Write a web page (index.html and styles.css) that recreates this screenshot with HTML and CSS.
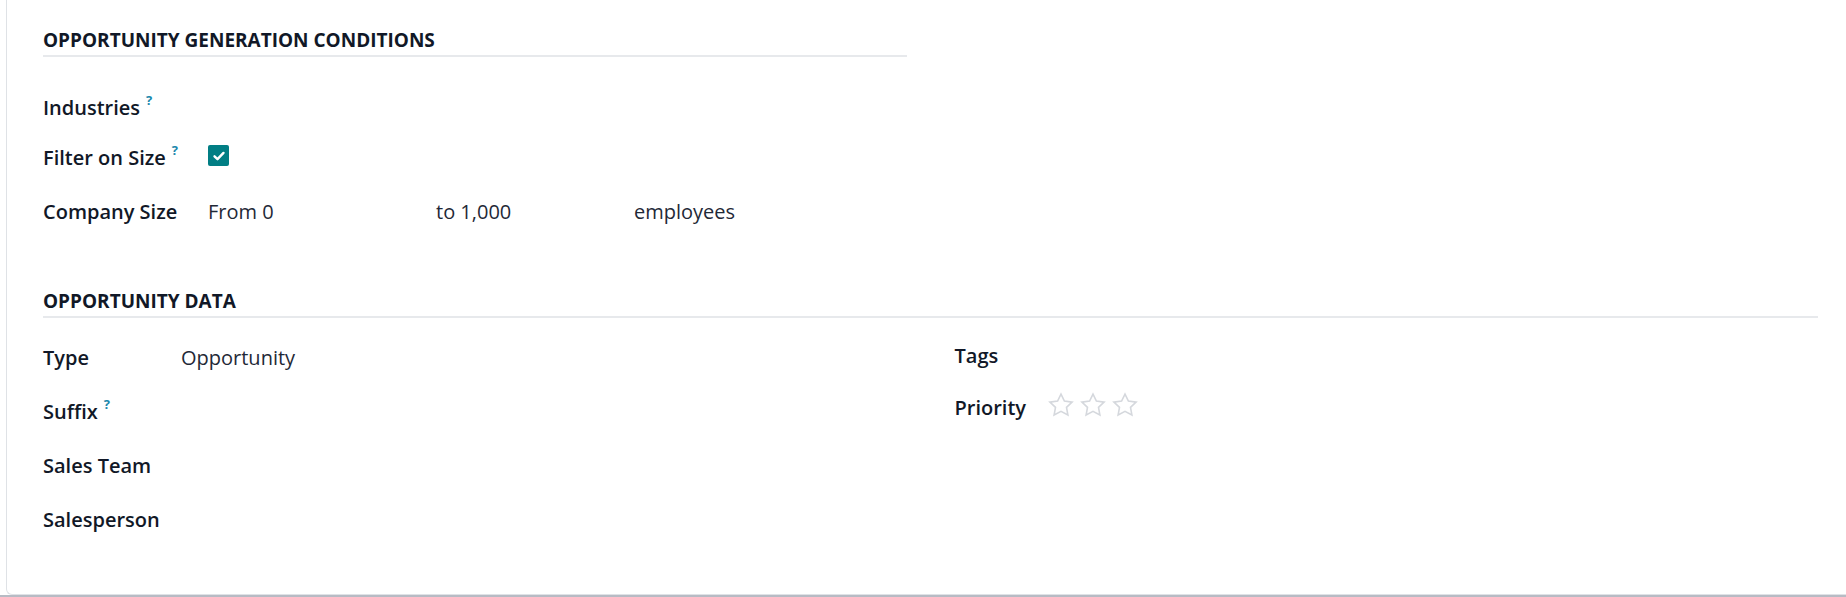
FILE: index.html
```html
<!DOCTYPE html>
<html lang="en">
<head>
<meta charset="utf-8">
<title>Opportunity generation</title>
<link rel="stylesheet" href="styles.css">
</head>
<body>
<div class="page">
  <div class="sheet">
    <section class="section section--half">
      <h2 class="separator">OPPORTUNITY GENERATION CONDITIONS</h2>
      <div class="group group--conditions">
        <div class="row row--industries">
          <div class="label">Industries<sup class="help">?</sup></div>
          <div class="value"></div>
        </div>
        <div class="row row--filter">
          <div class="label">Filter on Size<sup class="help">?</sup></div>
          <div class="value">
            <span class="checkbox">
              <svg viewBox="0 0 20 20" width="20" height="20" aria-hidden="true"><path d="M5.5 10.3l3 2.9 6-6.3" fill="none" stroke="#fff" stroke-width="2.4" stroke-linecap="round" stroke-linejoin="round"/></svg>
            </span>
          </div>
        </div>
        <div class="row">
          <div class="label">Company Size</div>
          <div class="value range">
            <span class="range-part range-part--from">From 0</span>
            <span class="range-part range-part--to">to 1,000</span>
            <span class="range-part">employees</span>
          </div>
        </div>
      </div>
    </section>

    <section class="section section--data">
      <h2 class="separator">OPPORTUNITY DATA</h2>
      <div class="columns">
        <div class="group group--left">
          <div class="row">
            <div class="label">Type</div>
            <div class="value">Opportunity</div>
          </div>
          <div class="row">
            <div class="label">Suffix<sup class="help">?</sup></div>
            <div class="value"></div>
          </div>
          <div class="row">
            <div class="label">Sales Team</div>
            <div class="value"></div>
          </div>
          <div class="row">
            <div class="label">Salesperson</div>
            <div class="value"></div>
          </div>
        </div>
        <div class="group group--right">
          <div class="row">
            <div class="label">Tags</div>
            <div class="value"></div>
          </div>
          <div class="row">
            <div class="label">Priority</div>
            <div class="value stars">
              <svg class="star" viewBox="0 0 26 24" width="26" height="25" aria-hidden="true"><path d="M13 1.6l3.4 7 7.7 1-5.6 5.3 1.4 7.6L13 18.8l-6.9 3.7 1.4-7.6-5.6-5.3 7.7-1z" fill="none" stroke="#d5d8dd" stroke-width="1.6" stroke-linejoin="miter"/></svg>
              <svg class="star" viewBox="0 0 26 24" width="26" height="25" aria-hidden="true"><path d="M13 1.6l3.4 7 7.7 1-5.6 5.3 1.4 7.6L13 18.8l-6.9 3.7 1.4-7.6-5.6-5.3 7.7-1z" fill="none" stroke="#d5d8dd" stroke-width="1.6" stroke-linejoin="miter"/></svg>
              <svg class="star" viewBox="0 0 26 24" width="26" height="25" aria-hidden="true"><path d="M13 1.6l3.4 7 7.7 1-5.6 5.3 1.4 7.6L13 18.8l-6.9 3.7 1.4-7.6-5.6-5.3 7.7-1z" fill="none" stroke="#d5d8dd" stroke-width="1.6" stroke-linejoin="miter"/></svg>
            </div>
          </div>
        </div>
      </div>
    </section>
  </div>
</div>
</body>
</html>
```

FILE: styles.css
```css
html, body {
  margin: 0;
  padding: 0;
  height: 597px;
  overflow: hidden;
  background: #ffffff;
}

body {
  font-family: "Open Sans", "Noto Sans", "DejaVu Sans", sans-serif;
  font-size: 20px;
  line-height: 28px;
  color: #111827;
}

.page {
  height: 597px;
  box-sizing: border-box;
  border-bottom: 2px solid #b7bbc4;
}

.sheet {
  height: 100%;
  margin-left: 6px;
  box-sizing: border-box;
  border-left: 1px solid #dfe2e6;
  border-bottom: 1px solid #dfe2e6;
  border-bottom-left-radius: 6px;
  padding: 26px 28px 0 36px;
}

.section--half {
  width: 864px;
}

.section--data {
  margin-top: 61px;
}

.separator {
  margin: 0;
  padding-bottom: 1px;
  font-size: 19px;
  line-height: 28px;
  font-weight: 700;
  color: #111827;
  border-bottom: 2px solid #e7e9ec;
}

.group--conditions {
  margin-top: 37px;
}

.columns {
  display: grid;
  grid-template-columns: 1fr 1fr;
  column-gap: 48px;
  margin-top: 26px;
}

.row {
  display: grid;
  min-height: 28px;
  margin-bottom: 24px;
}

.row:last-child {
  margin-bottom: 0;
}

.group--conditions .row {
  grid-template-columns: 165px 1fr;
}

.group--conditions .row--industries {
  margin-bottom: 22px;
}

.group--conditions .row--filter {
  margin-bottom: 25px;
}

.group--left .row {
  grid-template-columns: 138px 1fr;
  margin-bottom: 26px;
}

.group--left .row:last-child {
  margin-bottom: 0;
}

.group--right {
  margin-top: -2px;
}

.group--right .row {
  grid-template-columns: 93px 1fr;
}

.group--right .row:last-child {
  margin-bottom: 0;
}

.label {
  font-weight: 600;
  color: #111827;
  white-space: nowrap;
}

.help {
  display: inline-block;
  vertical-align: top;
  margin-left: 6px;
  font-size: 13px;
  line-height: 13px;
  font-weight: 700;
  color: #1a88ac;
}

.value {
  color: #1f2937;
  font-weight: 400;
}

.checkbox {
  display: inline-flex;
  align-items: center;
  justify-content: center;
  width: 21px;
  height: 21px;
  margin-top: 1px;
  background: #017e84;
  border-radius: 2px;
}

.range {
  display: flex;
}

.range-part--from {
  width: 228px;
}

.range-part--to {
  width: 198px;
}

.stars {
  display: flex;
  gap: 6px;
  margin-top: -2px;
}

.star {
  display: block;
}
```
